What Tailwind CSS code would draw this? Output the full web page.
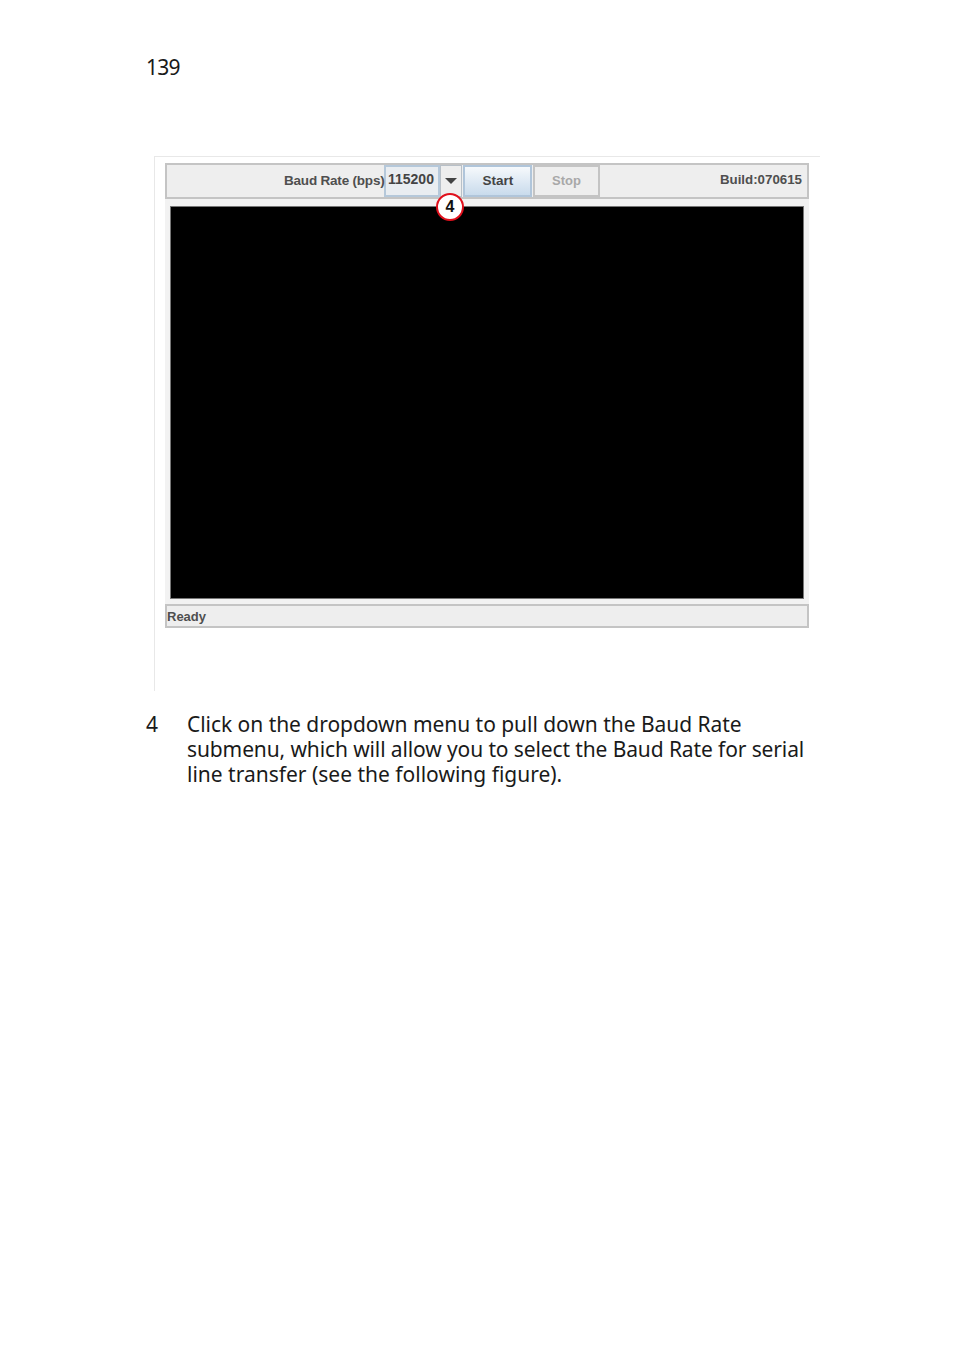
<!DOCTYPE html>
<html><head><meta charset="utf-8">
<script src="https://cdn.jsdelivr.net/npm/@tailwindcss/browser@4"></script>
</head>
<body class="bg-white">
<div class="w-[954px] h-[1369px] overflow-hidden pl-[146px] pt-[55px] font-['Noto_Sans',sans-serif] text-[21px] leading-[25px] text-[#1a1a1a]">
  <div class="h-[26px] tracking-[-0.8px]">139</div>
  <div class="mt-[75px] ml-[8px] w-[666px] h-[535px] border-t border-l border-[#e8e8e8] pl-[10px] pt-[6px] font-['Liberation_Sans',sans-serif] font-bold text-[13px] leading-[16px] text-[#4f4f4f]">
    <div class="w-[644px] h-[36px] border-2 border-[#c4c4c4] bg-[#eeeeee] flex items-center relative">
      <span class="ml-[116px] w-[101px] whitespace-nowrap text-[13.5px] tracking-[-0.2px] translate-x-[1px]">Baud Rate (bps)</span>
      <div class="w-[56px] h-[32px] border-2 border-[#b5c8da] bg-[#e9edf1] text-[#444] text-[14px] pl-[2px] leading-[24px] -mt-[1px]">115200</div>
      <div class="w-[22px] h-[32px] border border-[#b8c0c8] bg-[#eeeeee] flex items-center justify-center -mt-[1px]">
        <svg width="12" height="6" viewBox="0 0 12 6"><path d="M0 0h12L6 6z" fill="#444"/></svg>
      </div>
      <div class="ml-[1px] w-[69px] h-[32px] border-2 border-[#b0c5da] bg-gradient-to-b from-[#f6f9fc] to-[#c9dbec] flex items-center justify-center pl-[1px] text-[13.5px] text-[#444]">Start</div>
      <div class="ml-[1px] w-[67px] h-[32px] border-2 border-[#c4c4c4] bg-[#eeeeee] flex items-center justify-center text-[#a8a8a8]">Stop</div>
      <span class="ml-auto mr-[5px] -mt-[2px] text-[13.3px] text-[#4f4f4f]">Build:070615</span>
      <div class="absolute left-[269px] top-[28px] w-[28px] h-[28px] rounded-full border-2 border-[#e0101c] bg-white flex items-center justify-center text-[#111] text-[16px]">4</div>
    </div>
    <div class="w-[644px] h-[405px] bg-[#f2f2f2] pl-[5px] pt-[7px]">
      <div class="w-[634px] h-[393px] bg-black border border-[#777]"></div>
    </div>
    <div class="w-[644px] h-[24px] border-2 border-[#c4c4c4] bg-[#eeeeee] leading-[21px]">Ready</div>
  </div>
  <div class="mt-[21px] flex">
    <div class="w-[41px]">4</div>
    <div class="w-[640px]"><span class="tracking-[-0.04px]">Click on the dropdown menu to pull down the Baud Rate</span><br><span class="tracking-[-0.115px]">submenu, which will allow you to select the Baud Rate for serial</span><br>line transfer (see the following figure).</div>
  </div>
</div>
</body></html>
